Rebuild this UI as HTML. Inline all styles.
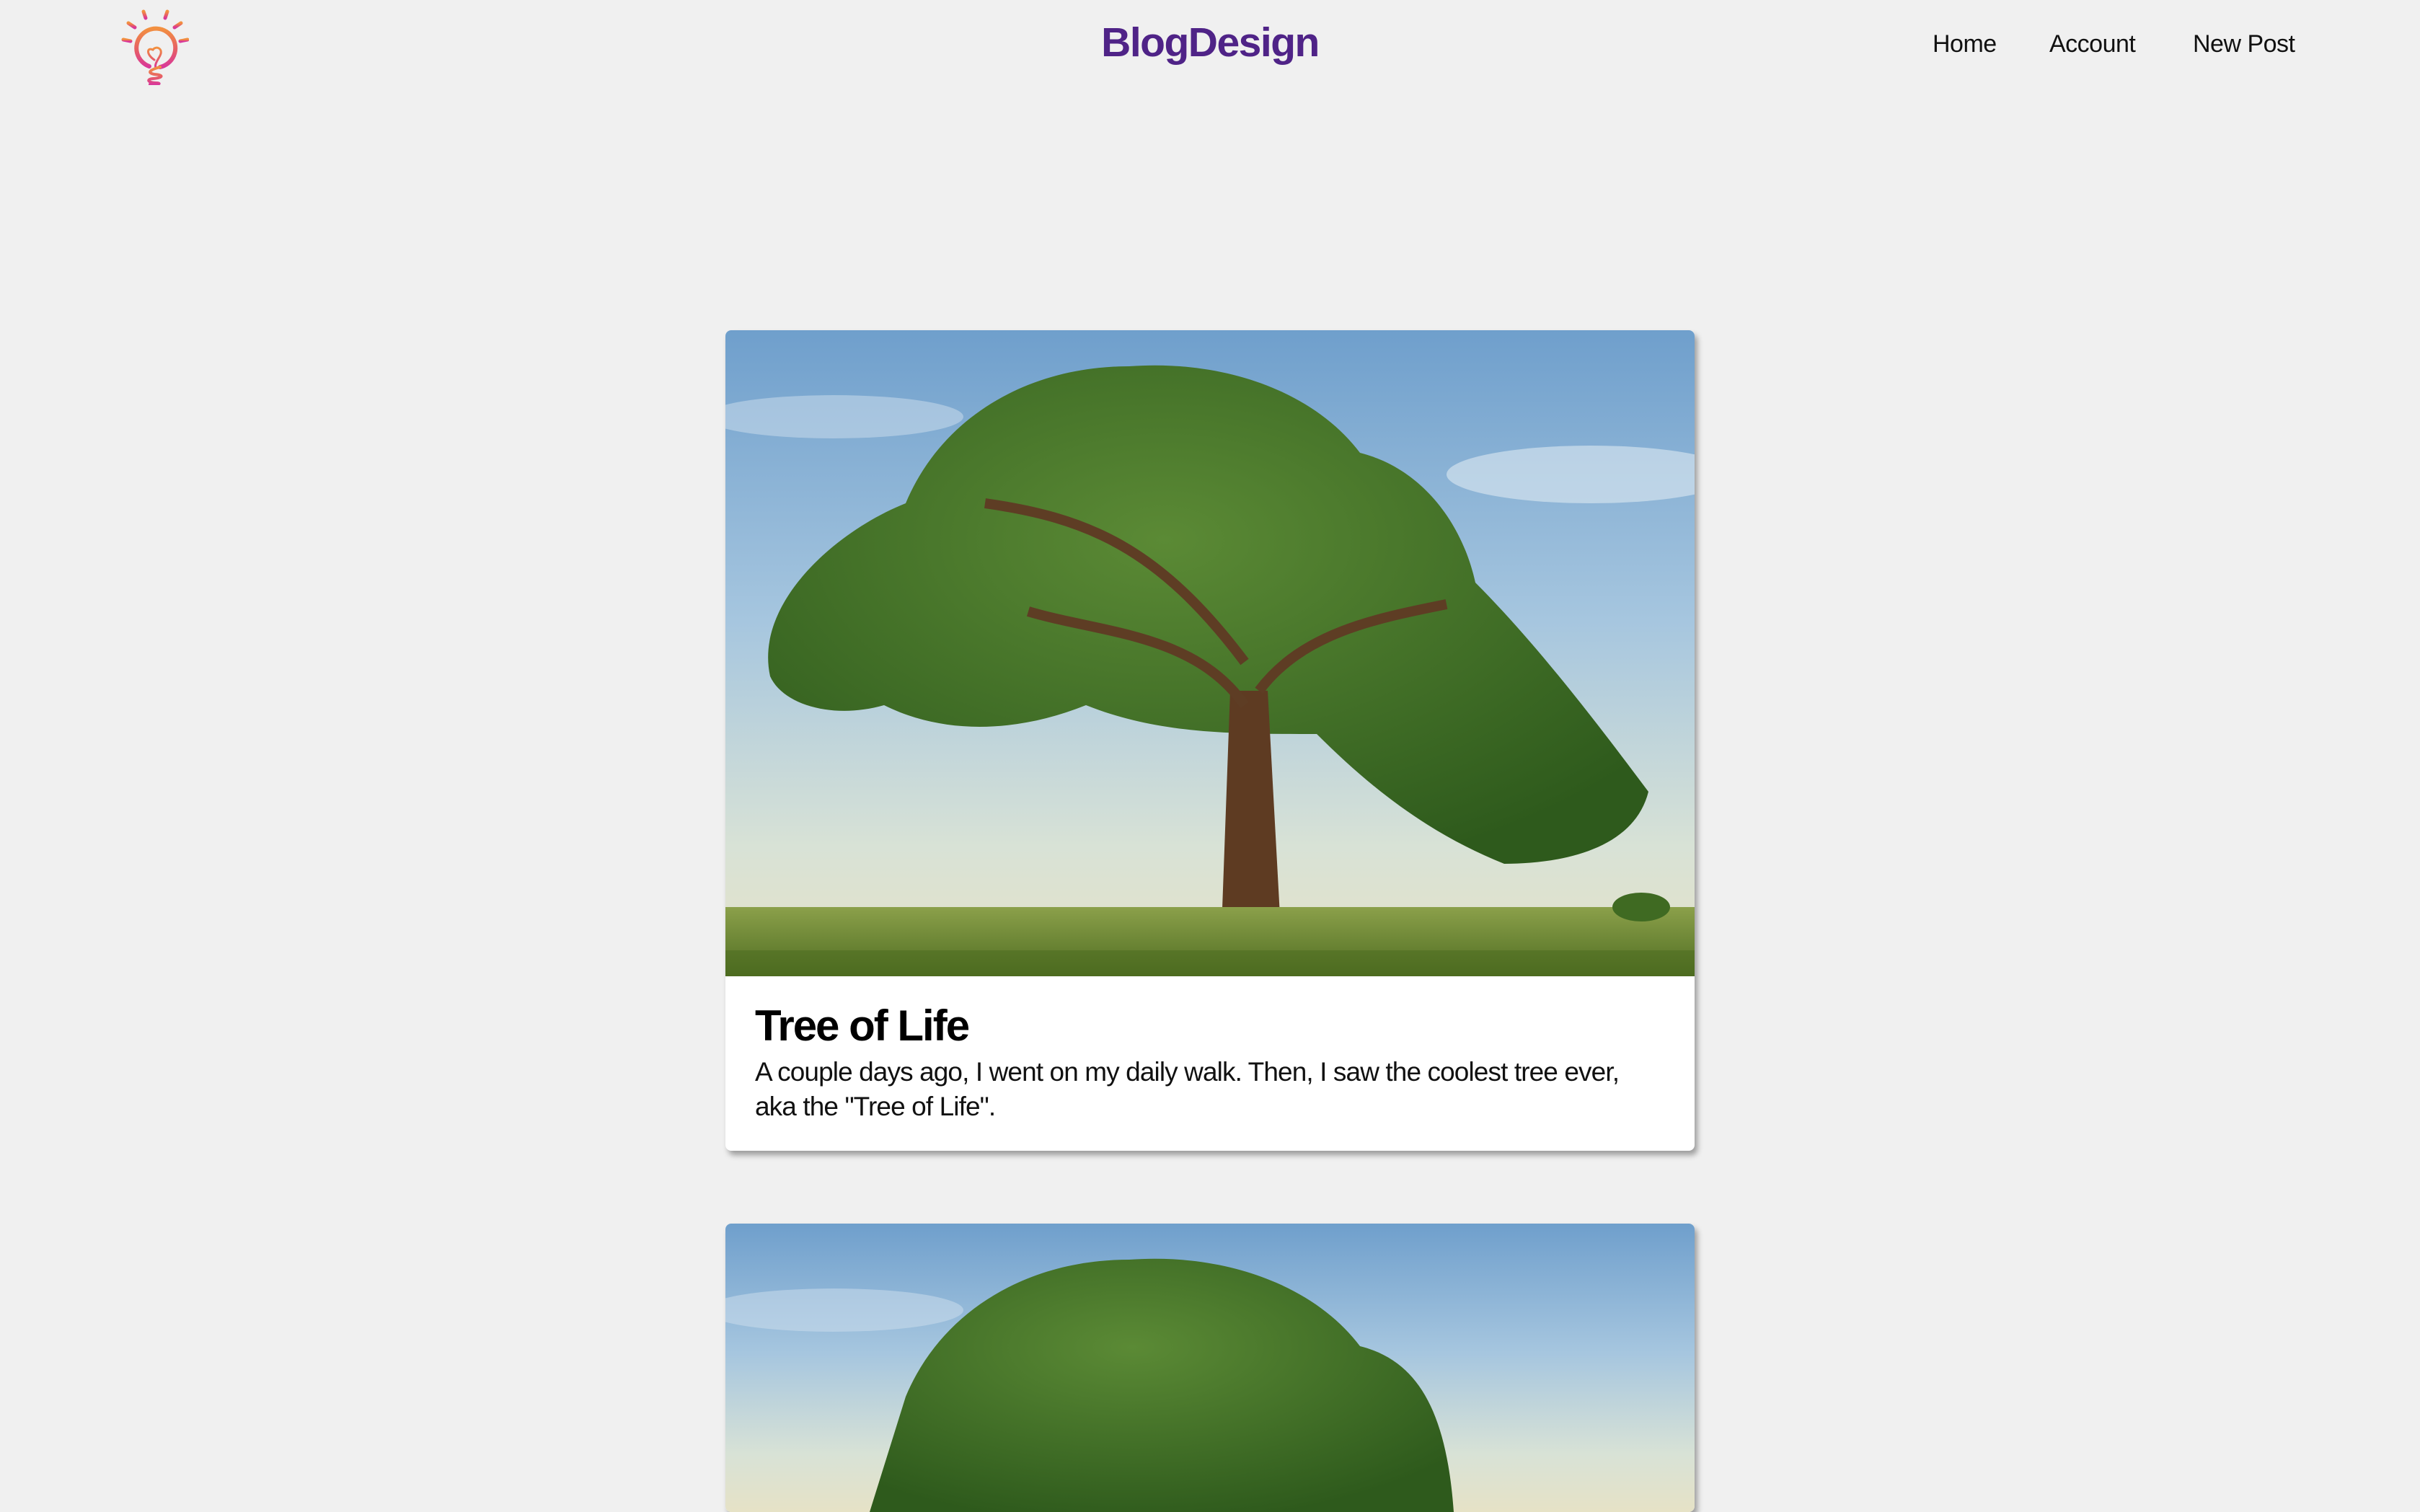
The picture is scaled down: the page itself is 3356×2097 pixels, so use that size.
<!DOCTYPE html>
<html><head><meta charset="utf-8"><style>
html,body{margin:0;padding:0;width:3356px;height:1876px;overflow:hidden;background:#f0f0f0;font-family:"Liberation Sans",sans-serif;}
.logo{position:absolute;left:152px;top:8px;}
.title{position:absolute;left:0;width:3356px;top:26px;text-align:center;font-weight:bold;font-size:57px;letter-spacing:-1.5px;color:#4f2387;}
.nav{position:absolute;top:42px;font-size:34px;color:#111;letter-spacing:-0.5px;}
.card{position:absolute;left:1006px;width:1344px;background:#fff;border-radius:8px;box-shadow:4px 6px 8px rgba(0,0,0,0.35);overflow:hidden;}
</style></head><body>
<svg class="logo" width="110" height="110" viewBox="0 0 110 110">
<defs><linearGradient id="lg" x1="0" y1="0" x2="0" y2="1"><stop offset="0" stop-color="#f29040"/><stop offset="0.6" stop-color="#e55a6a"/><stop offset="1" stop-color="#d8389a"/></linearGradient></defs>
<g stroke="url(#lg)" stroke-linecap="round" fill="none">
<g stroke-width="5"><line x1="47" y1="8" x2="50" y2="17"/><line x1="80" y1="8" x2="77" y2="17"/><line x1="26" y1="24" x2="35" y2="30"/><line x1="99" y1="24" x2="90" y2="30"/><line x1="19" y1="47" x2="29" y2="49"/><line x1="108" y1="47" x2="98" y2="49"/></g>
<path d="M55 84 A27 27 0 1 1 70 85" stroke-width="6"/>
<path d="M62 75 C50 67 52 57 60 61 C64 55 75 59 70 69 C67 75 62 81 64 86" stroke-width="3"/>
<path d="M70 85 C55 89 52 93 62 95 C76 96 74 100 60 101 C50 102 54 107 64 107 C72 107 70 110 56 109" stroke-width="4"/>
</g></svg>
<div class="title">BlogDesign</div>
<div class="nav" style="left:2680px">Home</div>
<div class="nav" style="left:2842px">Account</div>
<div class="nav" style="left:3041px">New Post</div>

<div class="card" style="top:458px;height:1138px;">
<svg width="1344" height="896" style="display:block">
<defs>
<linearGradient id="sky" x1="0" y1="0" x2="0" y2="1"><stop offset="0" stop-color="#6f9fcc"/><stop offset="0.45" stop-color="#a6c6df"/><stop offset="0.8" stop-color="#d8e2d6"/><stop offset="1" stop-color="#e6e2c6"/></linearGradient>
<linearGradient id="grass" x1="0" y1="0" x2="0" y2="1"><stop offset="0" stop-color="#8ba04a"/><stop offset="1" stop-color="#4f6d22"/></linearGradient>
<radialGradient id="can" cx="0.45" cy="0.35" r="0.7"><stop offset="0" stop-color="#5b8a35"/><stop offset="1" stop-color="#2e5a1c"/></radialGradient>
</defs>
<rect width="1344" height="896" fill="url(#sky)"/>
<ellipse cx="1200" cy="200" rx="200" ry="40" fill="#dde9f2" opacity="0.6"/>
<ellipse cx="150" cy="120" rx="180" ry="30" fill="#cfe0ee" opacity="0.5"/>
<path d="M62 480 C40 380 150 280 250 240 C300 120 420 50 560 50 C700 40 820 90 880 170 C960 190 1020 260 1040 350 C1130 440 1220 560 1280 640 C1260 720 1160 740 1080 740 C980 700 900 640 820 560 C700 560 600 560 500 520 C400 560 300 560 220 520 C150 540 80 520 62 480 Z" fill="url(#can)"/>
<path d="M700 500 L688 830 L770 830 L752 500 Z" fill="#5e3b22"/>
<path d="M720 520 C650 420 520 420 420 390 M740 500 C800 420 900 400 1000 380 M720 460 C600 300 500 260 360 240" stroke="#5e3d24" stroke-width="14" fill="none"/>
<rect x="0" y="800" width="1344" height="96" fill="url(#grass)"/>
<rect x="0" y="860" width="1344" height="36" fill="#4a6a1e" opacity="0.5"/>
<ellipse cx="1270" cy="800" rx="40" ry="20" fill="#3f6a22"/>
</svg>
<div style="position:absolute;left:41px;top:930px;font-weight:bold;font-size:60px;letter-spacing:-2px;color:#000;">Tree of Life</div>
<div style="position:absolute;left:41px;top:1005px;width:1290px;font-size:37px;letter-spacing:-0.9px;line-height:48px;color:#111;">A couple days ago, I went on my daily walk. Then, I saw the coolest tree ever,<br>aka the "Tree of Life".</div>
</div>

<div class="card" style="top:1697px;height:400px;">
<svg width="1344" height="400" style="display:block">
<rect width="1344" height="400" fill="url(#sky)"/>
<ellipse cx="150" cy="120" rx="180" ry="30" fill="#cfe0ee" opacity="0.5"/>
<path d="M250 240 C300 120 420 50 560 50 C700 40 820 90 880 170 C960 190 1000 260 1010 400 L200 400 Z" fill="url(#can)"/>
</svg>
</div>
</body></html>
